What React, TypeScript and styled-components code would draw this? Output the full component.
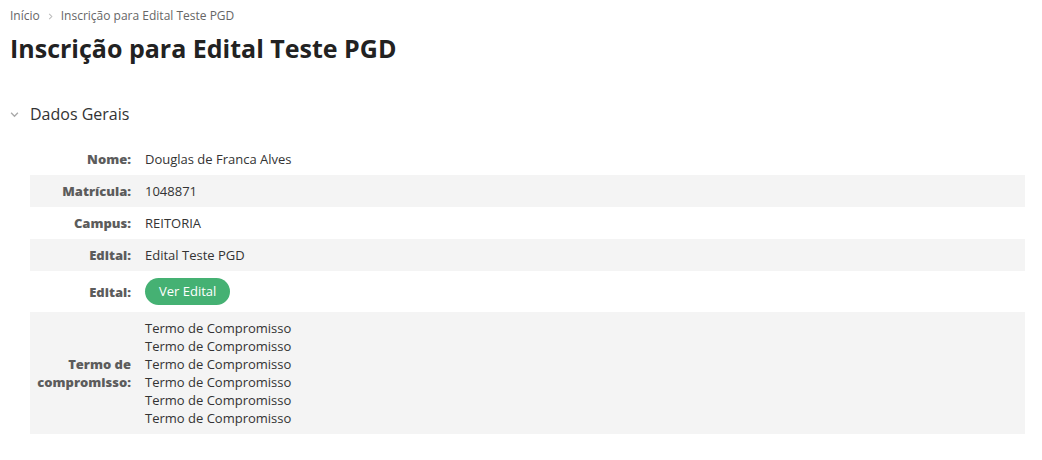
import styled, { createGlobalStyle } from "styled-components";

const GlobalStyle = createGlobalStyle`
  body {
    margin: 0;
    background: #fff;
    font-family: "Open Sans", "Liberation Sans", sans-serif;
    color: #333;
  }
`;

const Page = styled.main`
  padding: 7px 17px 0 10px;
`;

const Breadcrumb = styled.nav`
  display: flex;
  align-items: center;
  gap: 7px;
  font-size: 12px;
  line-height: 18px;
  color: #666;
`;

const Separator = styled.span`
  color: #bbb;
  display: flex;
`;

const Title = styled.h1`
  margin: 6px 0 0;
  font-size: 25px;
  line-height: 34px;
  font-weight: 700;
  color: #222;
`;

const Section = styled.section`
  margin-top: 38px;
`;

const SectionHeader = styled.div`
  display: flex;
  align-items: center;
  gap: 11px;
  font-size: 16px;
  line-height: 22px;
  color: #333;
`;

const Rows = styled.div`
  margin: 18px 0 0 20px;
`;

const Row = styled.div<{ $shaded?: boolean }>`
  display: grid;
  grid-template-columns: 108px 1fr;
  background: ${(p) => (p.$shaded ? "#f4f4f4" : "transparent")};
  font-size: 13px;
  line-height: 18px;
`;

const Label = styled.div`
  padding: 7px;
  text-align: right;
  font-weight: 800;
  color: #5c5c5c;
  display: flex;
  align-items: center;
  justify-content: flex-end;
`;

const Value = styled.div`
  padding: 7px;
  color: #333;
`;

const PillButton = styled.button`
  font-family: inherit;
  font-size: 13px;
  line-height: 19px;
  color: #fff;
  background: #45b173;
  border: 0;
  border-radius: 14px;
  padding: 4px 14px;
  white-space: nowrap;
  cursor: pointer;
`;

const Chevron = ({ dir, size }: { dir: "right" | "down"; size: number }) => (
  <svg width={size} height={size} viewBox="0 0 8 8" fill="none" stroke="currentColor" strokeWidth="1.2">
    {dir === "right" ? <path d="M2.5 1 L5.5 4 L2.5 7" /> : <path d="M1 2.5 L4 5.5 L7 2.5" />}
  </svg>
);

const DownIcon = styled.span`
  color: #aaa;
  display: flex;
`;

const termos = Array.from({ length: 6 }, () => "Termo de Compromisso");

export default function App() {
  return (
    <>
      <GlobalStyle />
      <Page>
        <Breadcrumb>
          <span>Início</span>
          <Separator>
            <Chevron dir="right" size={7} />
          </Separator>
          <span>Inscrição para Edital Teste PGD</span>
        </Breadcrumb>
        <Title>Inscrição para Edital Teste PGD</Title>
        <Section>
          <SectionHeader>
            <DownIcon>
              <Chevron dir="down" size={9} />
            </DownIcon>
            <span>Dados Gerais</span>
          </SectionHeader>
          <Rows>
            <Row>
              <Label>Nome:</Label>
              <Value>Douglas de Franca Alves</Value>
            </Row>
            <Row $shaded>
              <Label>Matrícula:</Label>
              <Value>1048871</Value>
            </Row>
            <Row>
              <Label>Campus:</Label>
              <Value>REITORIA</Value>
            </Row>
            <Row $shaded>
              <Label>Edital:</Label>
              <Value>Edital Teste PGD</Value>
            </Row>
            <Row>
              <Label>Edital:</Label>
              <Value>
                <PillButton>Ver Edital</PillButton>
              </Value>
            </Row>
            <Row $shaded>
              <Label>Termo de compromisso:</Label>
              <Value>
                {termos.map((t, i) => (
                  <div key={i}>{t}</div>
                ))}
              </Value>
            </Row>
          </Rows>
        </Section>
      </Page>
    </>
  );
}
